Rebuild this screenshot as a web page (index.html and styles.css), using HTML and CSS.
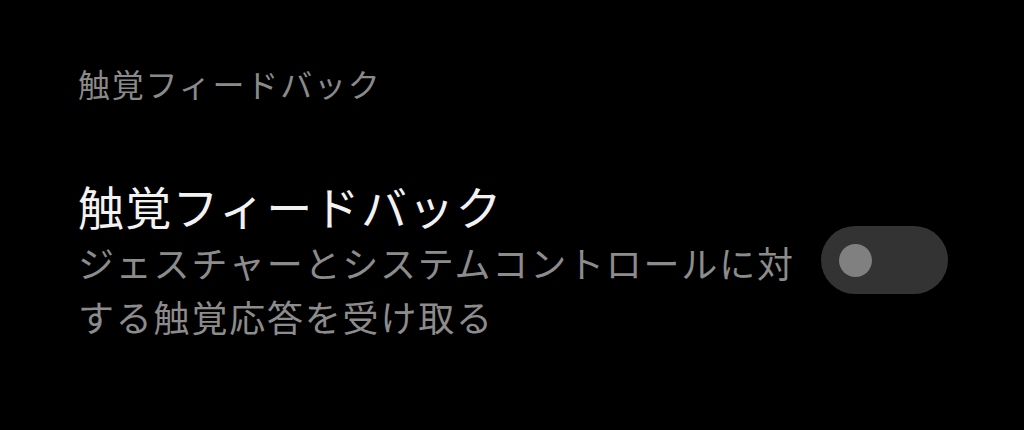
FILE: index.html
```html
<!DOCTYPE html>
<html lang="ja">
<head>
<meta charset="utf-8">
<link rel="stylesheet" href="styles.css">
</head>
<body>
<div class="screen">
  <div class="section-title">触覚フィードバック</div>
  <div class="row">
    <div class="texts">
      <div class="title">触覚フィードバック</div>
      <div class="summary">ジェスチャーとシステムコントロールに対する触覚応答を受け取る</div>
    </div>
    <div class="switch"><div class="knob"></div></div>
  </div>
</div>
</body>
</html>
```
FILE: styles.css
```css
html, body {
  margin: 0;
  padding: 0;
  background: #000;
}
.screen {
  width: 1024px;
  height: 430px;
  box-sizing: border-box;
  padding: 63px 76px 0 78px;
  font-family: "Noto Sans CJK JP", "Noto Sans", sans-serif;
}
.section-title {
  font-size: 32px;
  line-height: 40px;
  letter-spacing: 1.8px;
  color: #8a8a8a;
}
.row {
  display: flex;
  align-items: center;
  justify-content: space-between;
  margin-top: 74px;
}
.texts {
  width: 730px;
}
.title {
  font-size: 46px;
  line-height: 56px;
  letter-spacing: 1.3px;
  color: #f2f2f2;
}
.summary {
  margin-top: 2px;
  font-size: 36px;
  line-height: 54px;
  letter-spacing: 1.8px;
  color: #8c8c8c;
}
.switch {
  width: 127px;
  height: 68px;
  border-radius: 34px;
  background: #333;
  display: flex;
  align-items: center;
  padding-left: 18px;
  box-sizing: border-box;
}
.knob {
  width: 33px;
  height: 33px;
  border-radius: 50%;
  background: #808080;
}
```
